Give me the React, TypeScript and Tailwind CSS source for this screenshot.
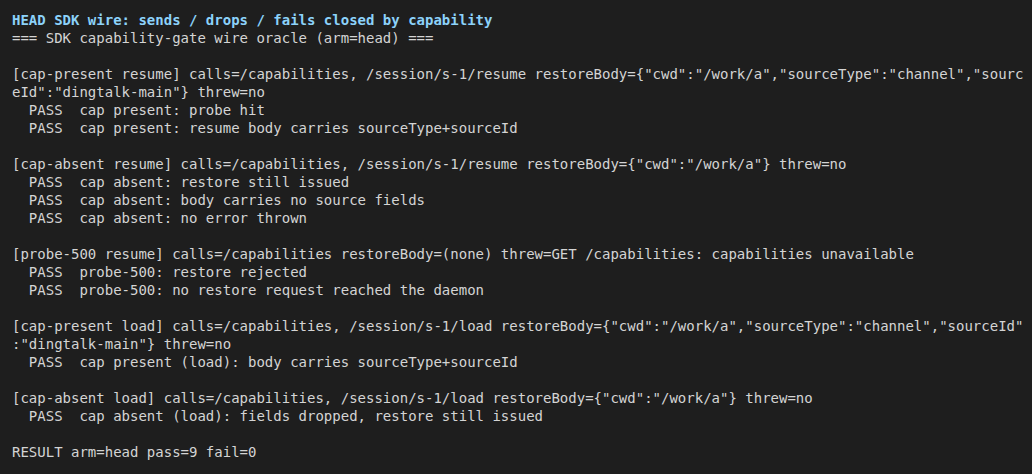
const lines: string[] = [
  "=== SDK capability-gate wire oracle (arm=head) ===",
  "",
  '[cap-present resume] calls=/capabilities, /session/s-1/resume restoreBody={"cwd":"/work/a","sourceType":"channel","sourc',
  'eId":"dingtalk-main"} threw=no',
  "  PASS  cap present: probe hit",
  "  PASS  cap present: resume body carries sourceType+sourceId",
  "",
  '[cap-absent resume] calls=/capabilities, /session/s-1/resume restoreBody={"cwd":"/work/a"} threw=no',
  "  PASS  cap absent: restore still issued",
  "  PASS  cap absent: body carries no source fields",
  "  PASS  cap absent: no error thrown",
  "",
  "[probe-500 resume] calls=/capabilities restoreBody=(none) threw=GET /capabilities: capabilities unavailable",
  "  PASS  probe-500: restore rejected",
  "  PASS  probe-500: no restore request reached the daemon",
  "",
  '[cap-present load] calls=/capabilities, /session/s-1/load restoreBody={"cwd":"/work/a","sourceType":"channel","sourceId"',
  ':"dingtalk-main"} threw=no',
  "  PASS  cap present (load): body carries sourceType+sourceId",
  "",
  '[cap-absent load] calls=/capabilities, /session/s-1/load restoreBody={"cwd":"/work/a"} threw=no',
  "  PASS  cap absent (load): fields dropped, restore still issued",
  "",
  "RESULT arm=head pass=9 fail=0",
];

export default function App() {
  return (
    <div className="w-[1032px] h-[474px] bg-[#1e1e1e] overflow-hidden pt-[11px] pl-3">
      <div
        className="text-[14px] leading-[18px] text-[#d4d4d4] whitespace-pre"
        style={{ fontFamily: '"DejaVu Sans Mono", monospace' }}
      >
        <div className="font-bold text-[#8cd2fa]">HEAD SDK wire: sends / drops / fails closed by capability</div>
        {lines.map((l, i) => (
          <div key={i} className="h-[18px]">
            {l}
          </div>
        ))}
      </div>
    </div>
  );
}
